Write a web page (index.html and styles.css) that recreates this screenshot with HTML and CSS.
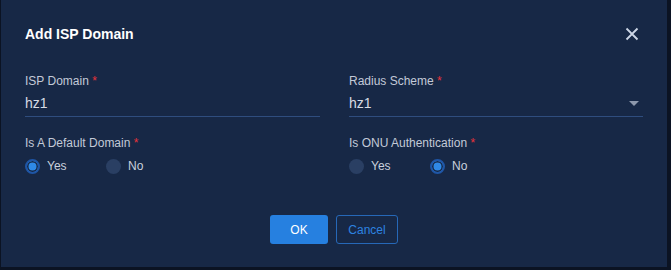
FILE: index.html
```html
<!DOCTYPE html>
<html lang="en">
<head>
    <meta charset="UTF-8">
    <meta name="viewport" content="width=device-width, initial-scale=1.0">
    <title>Add ISP Domain</title>
    <link rel="stylesheet" href="styles.css">
</head>
<body>
    <div class="dialog">
        <div class="dialog-header">
            <span class="dialog-title">Add ISP Domain</span>
            <span class="close-btn">
                <svg width="14" height="14" viewBox="0 0 14 14">
                    <path d="M1.5 1.5 L12.5 12.5 M12.5 1.5 L1.5 12.5" stroke="#cdd6e6" stroke-width="1.8" fill="none"/>
                </svg>
            </span>
        </div>

        <div class="form-grid">
            <div class="field">
                <div class="field-label">ISP Domain <span class="req">*</span></div>
                <div class="field-input">hz1</div>
            </div>
            <div class="field">
                <div class="field-label">Radius Scheme <span class="req">*</span></div>
                <div class="field-input select">
                    <span>hz1</span>
                    <span class="caret"></span>
                </div>
            </div>

            <div class="field field-radio">
                <div class="field-label">Is A Default Domain <span class="req">*</span></div>
                <div class="radio-group">
                    <label class="radio checked"><span class="dot"></span>Yes</label>
                    <label class="radio"><span class="dot"></span>No</label>
                </div>
            </div>
            <div class="field field-radio">
                <div class="field-label">Is ONU Authentication <span class="req">*</span></div>
                <div class="radio-group">
                    <label class="radio"><span class="dot"></span>Yes</label>
                    <label class="radio checked"><span class="dot"></span>No</label>
                </div>
            </div>
        </div>

        <div class="dialog-footer">
            <button class="btn btn-primary">OK</button>
            <button class="btn btn-outline">Cancel</button>
        </div>
    </div>
</body>
</html>
```

FILE: styles.css
```css
body {
    margin: 0;
    background-color: #0b1323;
    font-family: "Liberation Sans", Arial, sans-serif;
}

.dialog {
    margin-left: 1px;
    width: 666px;
    height: 267px;
    box-sizing: border-box;
    padding: 24px 24px 0 24px;
    background-color: #172846;
    color: #d2d8e4;
}

/* Header */
.dialog-header {
    display: flex;
    align-items: center;
    justify-content: space-between;
    height: 20px;
}

.dialog-title {
    font-size: 14px;
    font-weight: bold;
    line-height: 20px;
    color: #ffffff;
}

.close-btn {
    display: flex;
    margin-right: 4px;
    margin-top: -1px;
}

/* Form */
.form-grid {
    display: grid;
    grid-template-columns: 295px 294px;
    column-gap: 29px;
    margin-top: 29px;
}

.field-label {
    font-size: 12px;
    line-height: 16px;
    color: #c3cad8;
}

.req {
    color: #e8333a;
}

.field-input {
    margin-top: 4px;
    height: 23px;
    font-size: 14px;
    line-height: 20px;
    color: #d6dbe5;
    border-bottom: 1px solid #2f4d7e;
}

.select {
    display: flex;
    justify-content: space-between;
}

.caret {
    width: 0;
    height: 0;
    margin: 8px 4px 0 0;
    border-left: 5px solid transparent;
    border-right: 5px solid transparent;
    border-top: 5px solid #8d98ac;
}

.field-radio {
    margin-top: 18px;
}

.radio-group {
    display: flex;
    margin-top: 5px;
}

.radio {
    display: flex;
    align-items: center;
    gap: 7px;
    width: 81px;
    font-size: 12px;
    line-height: 20px;
    color: #c9d0dd;
}

.dot {
    width: 15px;
    height: 15px;
    border-radius: 50%;
    box-sizing: border-box;
    background-color: #2a3f63;
}

.radio.checked .dot {
    border: 2px solid #1f56a6;
    background-color: #2f89e6;
    box-shadow: inset 0 0 0 1.5px #172846;
}

/* Footer */
.dialog-footer {
    display: flex;
    justify-content: center;
    gap: 8px;
    margin-top: 39px;
    padding-left: 0;
}

.btn {
    height: 29px;
    padding: 0;
    font-family: "Liberation Sans", Arial, sans-serif;
    font-size: 12px;
    border-radius: 3px;
    cursor: pointer;
}

.btn-primary {
    width: 58px;
    background-color: #2680e0;
    color: #ffffff;
    border: none;
}

.btn-outline {
    width: 62px;
    background-color: transparent;
    color: #2d83e0;
    border: 1px solid #2668b8;
}
```
